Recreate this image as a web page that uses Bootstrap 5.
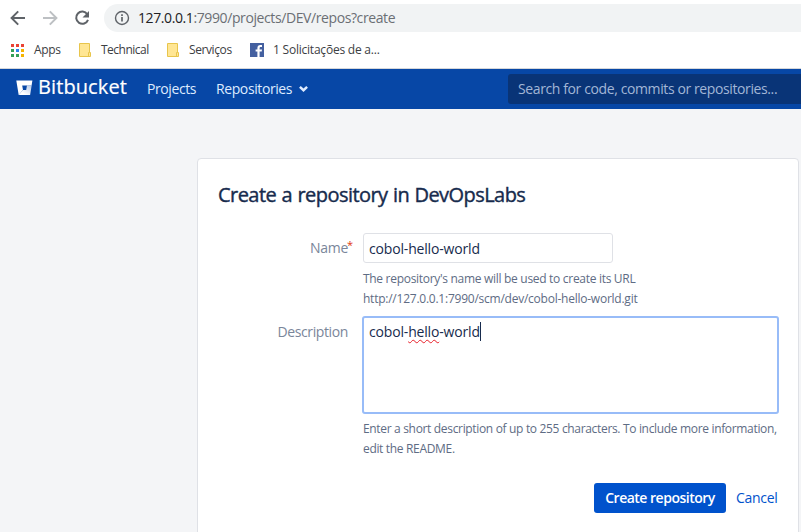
<!DOCTYPE html>
<html lang="en">
<head>
<meta charset="utf-8">
<meta name="viewport" content="width=device-width, initial-scale=1">
<title>Create a repository - Bitbucket</title>
<link href="https://cdn.jsdelivr.net/npm/bootstrap@5.3.0/dist/css/bootstrap.min.css" rel="stylesheet">
<style>
  body { font-family: "Segoe UI", "Open Sans", "Noto Sans", sans-serif; font-size: 14px; line-height: 20px; color: #172b4d; background: #f4f5f7; height: 532px; letter-spacing: -.3px; }
  svg { display: block; flex: none; }
  .browser-bar { height: 69px; border-bottom: 1px solid #d5d7da; }
  .toolbar-row { height: 36px; padding-left: 10px; }
  .address { height: 28px; margin-left: 14px; padding-left: 10px; background: #f1f3f4; border-radius: 14px 0 0 14px; color: #202124; }
  .address-text { margin-left: 8px; letter-spacing: -.4px; }
  .address-rest { color: #6b6f74; }
  .bookmarks { height: 30px; padding: 0 0 2px 11px; font-size: 12px; color: #3c4043; }
  .bookmark-item { gap: 10px; }
  .bm-apps { width: 68px; }
  .bm-technical { width: 88px; letter-spacing: -.5px; }
  .bm-servicos { width: 83px; letter-spacing: -.4px; }
  .bm-solicit { gap: 9px; letter-spacing: -.22px; }
  .app-header { height: 40px; background: #0747a6; color: #deebff; padding: 0 0 0 16px; }
  .app-header a { color: #deebff; }
  .brand-logo { margin-top: -2px; }
  .brand-name { width: 109px; margin-left: 5px; margin-top: -4px; font-size: 20px; line-height: 24px; color: #fff; letter-spacing: .1px; -webkit-text-stroke: .2px #fff; }
  .nav-projects { width: 69px; letter-spacing: -.4px; }
  .nav-repos { width: 83px; letter-spacing: -.4px; }
  .search-box { width: 293px; height: 30px; padding: 0 10px; background: #093477; border: 0; border-radius: 3px 0 0 3px; color: #a2b6d6; }
  .search-text { letter-spacing: -.39px; }
  .repo-card { width: 602px; height: 400px; margin: 49px 0 0 197px; padding: 24px 20px 0; border: 1px solid #dfe1e6; border-radius: 4px; }
  .page-title { font-size: 20px; line-height: 24px; font-weight: 400; -webkit-text-stroke: .4px #172b4d; margin-bottom: 26px; letter-spacing: -.55px; word-spacing: .7px; }
  .field-name { flex: none; width: 130px; margin-right: 15px; color: #7a869a; }
  .name-label { padding-top: 5px; margin-right: -1px; }
  .required-mark { width: 6px; margin-right: -5px; color: #de350b; font-size: 11px; line-height: 1; margin-top: 6px; }
  .desc-label { padding-top: 6px; letter-spacing: -.38px; }
  .typed { letter-spacing: -.17px; }
  .text-field { width: 250px; height: 30px; padding: 2px 5px 0; border: 1px solid #dfe1e6; border-radius: 3px; }
  .text-area { width: 417px; height: 98px; margin-left: -1px; padding: 4px 5px; border: 2px solid #98bcf8; border-radius: 3px; }
  .caret { width: 1px; height: 19px; background: #172b4d; }
  .misspelt { text-decoration: underline wavy #e8202a 1px; text-underline-offset: 2px; text-decoration-skip-ink: none; }
  .help-text { font-size: 12px; color: #5e6c84; }
  .name-help { padding: 6px 0 7px; letter-spacing: -.3px; }
  .url-line { letter-spacing: -.24px; }
  .desc-help { padding-top: 5px; letter-spacing: -.33px; }
  .btn-create { height: 30px; width: 132px; padding: 0 0 1px; margin-right: 10px; font-size: 14px; font-weight: 600; letter-spacing: -.5px; background: #0052cc; color: #fff; border: 0; border-radius: 3px; }
  .cancel-link { color: #0052cc; width: 42px; }
</style>
</head>
<body class="overflow-hidden">
<header class="browser-bar bg-white">
  <div class="toolbar-row d-flex align-items-center">
    <svg width="16" height="16" viewBox="0 0 16 16" fill="none" stroke="#5f6368" stroke-width="2"><path d="M15 8H2M8.2 1.4 1.6 8l6.6 6.6"/></svg>
    <svg class="ms-3" width="16" height="16" viewBox="0 0 16 16" fill="none" stroke="#bdc0c3" stroke-width="2"><path d="M1 8h13M7.8 1.4 14.4 8l-6.6 6.6"/></svg>
    <svg class="ms-3" width="16" height="16" viewBox="0 0 16 16" fill="none" stroke="#5f6368" stroke-width="2"><path d="M13.3 4.2A6.1 6.1 0 1 0 14 9.8"/><path d="M15 1v6.5H8.5z" fill="#5f6368" stroke="none"/></svg>
    <div class="address flex-fill d-flex align-items-center">
      <svg width="16" height="16" viewBox="0 0 16 16" fill="none" stroke="#5f6368"><circle cx="8" cy="8" r="6.5" stroke-width="1.4"/><path d="M8 7v4.5M8 4.3v1.8" stroke-width="1.7"/></svg>
      <div class="address-text">127.0.0.1<span class="address-rest">:7990/projects/DEV/repos?create</span></div>
    </div>
  </div>
  <nav class="bookmarks d-flex align-items-center">
    <div class="bookmark-item bm-apps d-flex align-items-center">
      <svg width="13" height="13" viewBox="0 0 13 13"><path fill="#ea4335" d="M0 0h3v3H0zM5 0h3v3H5zM10 0h3v3h-3z"/><path fill="#34a058" d="M0 5h3v3H0zM0 10h3v3H0zM5 10h3v3H5z"/><path fill="#2b85ee" d="M5 5h3v3H5z"/><path fill="#f5b400" d="M10 5h3v3h-3zM10 10h3v3h-3z"/></svg>
      <span>Apps</span>
    </div>
    <div class="bookmark-item bm-technical d-flex align-items-center">
      <svg width="12" height="14" viewBox="0 0 12 14"><path d="M.5.5h10v9h1v4H.5z" fill="#ffe694" stroke="#e8c54c"/><path d="M9.5 13V9.5h1" fill="none" stroke="#e8c54c"/></svg>
      <span>Technical</span>
    </div>
    <div class="bookmark-item bm-servicos d-flex align-items-center">
      <svg width="12" height="14" viewBox="0 0 12 14"><path d="M.5.5h10v9h1v4H.5z" fill="#ffe694" stroke="#e8c54c"/><path d="M9.5 13V9.5h1" fill="none" stroke="#e8c54c"/></svg>
      <span>Serviços</span>
    </div>
    <div class="bm-solicit d-flex align-items-center">
      <svg width="14" height="14" viewBox="0 0 14 14"><path fill="#4460a0" d="M0 0h14v14H0z"/><path fill="#fff" d="M7.4 14V8.6H5.6V6.5h1.8V5.1c0-2 1.1-3 2.9-3h1.7v2h-1.2c-.9 0-1.2.4-1.2 1.2v1.2H12l-.3 2.1H9.6V14z"/></svg>
      <span>1 Solicitações de a...</span>
    </div>
  </nav>
</header>
<nav class="app-header d-flex align-items-center">
  <svg class="brand-logo" width="17" height="16" viewBox="0 0 17 16"><defs><linearGradient id="pail" x1="1" y1="0" x2=".3" y2=".8"><stop offset="0" stop-color="#b3c8e8"/><stop offset="1" stop-color="#fff"/></linearGradient></defs><path fill="#fff" d="M.3.5h16.1L15.6 5.4H6.2L7 10 2.7 14.9z"/><path fill="url(#pail)" d="M15.7 5.2 14.1 14.9H2.7L7 10h3.2l.8-4.8z"/></svg>
  <div class="brand-name">Bitbucket</div>
  <a class="nav-projects text-decoration-none" href="#">Projects</a>
  <a class="nav-repos text-decoration-none" href="#">Repositories</a>
  <svg width="9" height="6" viewBox="0 0 9 6" fill="none" stroke="#deebff" stroke-width="2.5"><path d="m.9.9 3.6 3.3L8.1.9"/></svg>
  <div class="search-box ms-auto d-flex align-items-center"><span class="search-text text-nowrap">Search for code, commits or repositories...</span></div>
</nav>
<main class="repo-card card">
  <h1 class="page-title">Create a repository in DevOpsLabs</h1>
  <div class="d-flex">
    <div class="field-name d-flex justify-content-end"><span class="name-label">Name</span><span class="required-mark">*</span></div>
    <div>
      <div class="text-field d-flex align-items-center"><span class="typed">cobol-hello-world</span></div>
      <div class="help-text name-help text-nowrap"><div>The repository's name will be used to create its URL</div><div class="url-line">http://127.0.0.1:7990/scm/dev/cobol-hello-world.git</div></div>
    </div>
  </div>
  <div class="d-flex">
    <div class="field-name desc-label text-end">Description</div>
    <div>
      <div class="text-area d-flex"><span class="typed">cobol-<span class="misspelt">hello</span>-world</span><span class="caret"></span></div>
      <div class="help-text desc-help text-nowrap"><div>Enter a short description of up to 255 characters. To include more information,</div><div>edit the README.</div></div>
    </div>
  </div>
  <div class="d-flex justify-content-end align-items-center mt-4">
    <button class="btn btn-create" type="button">Create repository</button>
    <a class="cancel-link text-decoration-none" href="#">Cancel</a>
  </div>
</main>
<script src="https://cdn.jsdelivr.net/npm/bootstrap@5.3.0/dist/js/bootstrap.bundle.min.js"></script>
</body>
</html>
